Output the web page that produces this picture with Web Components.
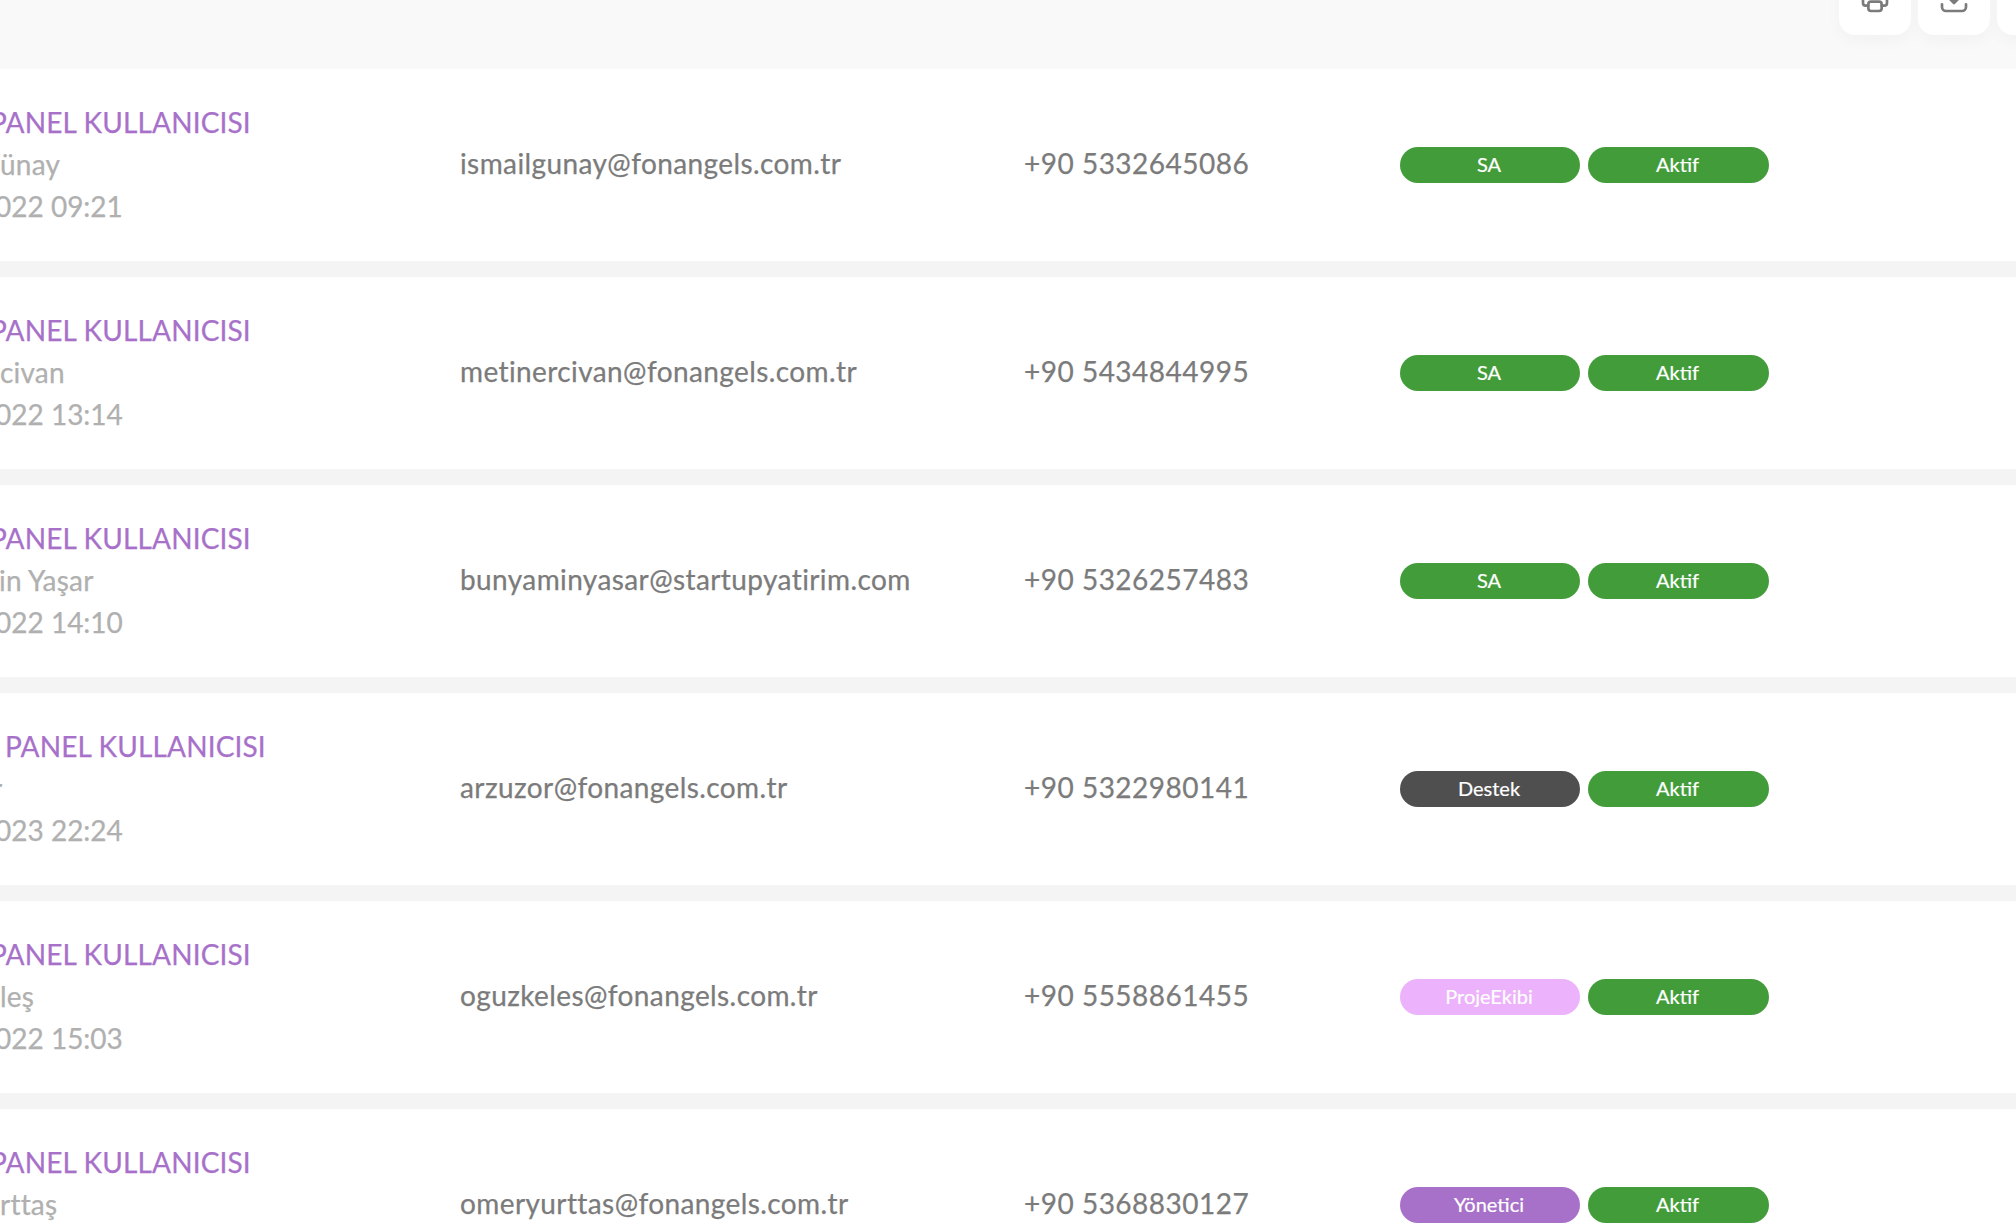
<!DOCTYPE html>
<html lang="tr">
<head>
<meta charset="utf-8">
<title>Kullanıcılar</title>
<style>
  html, body { margin: 0; height: 100%; overflow: hidden; background: #f4f4f4; }
  body { font-family: "Lato", "Open Sans", sans-serif; }
</style>
</head>
<body>
<user-toolbar></user-toolbar>
<user-list>
  <user-row title-shift="-10" name-shift="0" date-shift="-5" name="ünay" date="022 09:21" email="ismailgunay@fonangels.com.tr" phone="+90 5332645086">
    <status-badge color="#439c3a">SA</status-badge><status-badge color="#439c3a">Aktif</status-badge>
  </user-row>
  <user-row title-shift="-10" name-shift="0" date-shift="-5" name="civan" date="022 13:14" email="metinercivan@fonangels.com.tr" phone="+90 5434844995">
    <status-badge color="#439c3a">SA</status-badge><status-badge color="#439c3a">Aktif</status-badge>
  </user-row>
  <user-row title-shift="-10" name-shift="-1" date-shift="-5" name="in Yaşar" date="022 14:10" email="bunyaminyasar@startupyatirim.com" phone="+90 5326257483">
    <status-badge color="#439c3a">SA</status-badge><status-badge color="#439c3a">Aktif</status-badge>
  </user-row>
  <user-row title-shift="5" name-shift="-8" date-shift="-5" name="r" date="023 22:24" email="arzuzor@fonangels.com.tr" phone="+90 5322980141">
    <status-badge color="#4f4f4f">Destek</status-badge><status-badge color="#439c3a">Aktif</status-badge>
  </user-row>
  <user-row title-shift="-10" name-shift="0" date-shift="-5" name="leş" date="022 15:03" email="oguzkeles@fonangels.com.tr" phone="+90 5558861455">
    <status-badge color="#ecb2fb">ProjeEkibi</status-badge><status-badge color="#439c3a">Aktif</status-badge>
  </user-row>
  <user-row title-shift="-10" name-shift="0" date-shift="-5" name="rttaş" date="" email="omeryurttas@fonangels.com.tr" phone="+90 5368830127">
    <status-badge color="#a871c9">Yönetici</status-badge><status-badge color="#439c3a">Aktif</status-badge>
  </user-row>
</user-list>

<script>
class UserToolbar extends HTMLElement {
  constructor() {
    super();
    this.attachShadow({ mode: "open" });
    this.shadowRoot.innerHTML = `
    <style>
      :host {
        display: flex;
        justify-content: flex-end;
        align-items: flex-end;
        gap: 7px;
        height: 69px;
        box-sizing: border-box;
        padding-bottom: 34px;
        margin-right: -53px;
        background: #f9f9f9;
      }
      .btn {
        flex: none;
        width: 72px;
        height: 72px;
        border-radius: 16px;
        background: #fff;
        box-shadow: 0 6px 16px rgba(0, 0, 0, 0.03);
        display: flex;
        align-items: center;
        justify-content: center;
      }
      svg { width: 32px; height: 32px; fill: none; stroke: #7b7b7b; stroke-width: 2; }
    </style>
    <div class="btn">
      <svg viewBox="0 0 24 24" stroke-linecap="round" stroke-linejoin="round">
        <path d="M7 8V3h10v5"/>
        <path d="M7 17H5a2 2 0 0 1-2-2v-5a2 2 0 0 1 2-2h14a2 2 0 0 1 2 2v5a2 2 0 0 1-2 2h-2"/>
        <rect x="7" y="14" width="10" height="7" rx="2"/>
      </svg>
    </div>
    <div class="btn">
      <svg viewBox="0 0 24 24" stroke-linecap="round" stroke-linejoin="round">
        <path d="M12 4v10"/>
        <path d="M8 11l4 4 4-4" fill="#7b7b7b"/>
        <path d="M3 16v2a3 3 0 0 0 3 3h12a3 3 0 0 0 3-3v-2"/>
      </svg>
    </div>
    <div class="btn"></div>`;
  }
}

class UserList extends HTMLElement {
  constructor() {
    super();
    this.attachShadow({ mode: "open" });
    this.shadowRoot.innerHTML = `
    <style>
      :host { display: flex; flex-direction: column; gap: 16px; }
    </style>
    <slot></slot>`;
  }
}

class UserRow extends HTMLElement {
  constructor() {
    super();
    this.attachShadow({ mode: "open" });
    this.shadowRoot.innerHTML = `
    <style>
      :host {
        display: grid;
        grid-template-columns: 459px 564px 377px 1fr;
        align-items: center;
        height: 192px;
        background: #fff;
        font-size: 28px;
        line-height: 42px;
        white-space: nowrap;
        overflow: hidden;
        -webkit-text-stroke: 0.25px currentColor;
      }
      .who { padding-bottom: 2px; }
      .email, .phone { padding-bottom: 4px; }
      .who div { height: 42px; }
      .title { color: #a871c9; letter-spacing: 0.15px; }
      .name, .date { color: #b0b0b0; }
      .name { letter-spacing: 0.2px; }
      .email, .phone { color: #7b7b7b; letter-spacing: 0.4px; }
      .email { padding-left: 1px; }
      .phone { letter-spacing: 0.5px; padding-left: 1px; }
      .badges { display: flex; gap: 8px; -webkit-text-stroke: 0.2px #fff; }
    </style>
    <div class="who">
      <div class="title">PANEL KULLANICISI</div>
      <div class="name"></div>
      <div class="date"></div>
    </div>
    <div class="email"></div>
    <div class="phone"></div>
    <div class="badges"><slot></slot></div>`;
  }

  connectedCallback() {
    const root = this.shadowRoot;
    root.querySelector(".name").textContent = this.getAttribute("name");
    root.querySelector(".date").textContent = this.getAttribute("date");
    root.querySelector(".email").textContent = this.getAttribute("email");
    root.querySelector(".phone").textContent = this.getAttribute("phone");
    root.querySelector(".title").style.marginLeft = this.getAttribute("title-shift") + "px";
    root.querySelector(".name").style.marginLeft = this.getAttribute("name-shift") + "px";
    root.querySelector(".date").style.marginLeft = this.getAttribute("date-shift") + "px";
  }
}

class StatusBadge extends HTMLElement {
  constructor() {
    super();
    this.attachShadow({ mode: "open" });
    this.shadowRoot.innerHTML = `
    <style>
      :host {
        display: block;
        box-sizing: border-box;
        width: 180px;
        height: 36px;
        padding-right: 2px;
        border-radius: 18px;
        color: #fff;
        font-size: 20px;
        line-height: 34px;
        text-align: center;
      }
      :host(:last-child) { width: 181px; }
    </style>
    <slot></slot>`;
  }

  connectedCallback() {
    this.style.background = this.getAttribute("color");
  }
}

customElements.define("user-toolbar", UserToolbar);
customElements.define("user-list", UserList);
customElements.define("user-row", UserRow);
customElements.define("status-badge", StatusBadge);
</script>
</body>
</html>
